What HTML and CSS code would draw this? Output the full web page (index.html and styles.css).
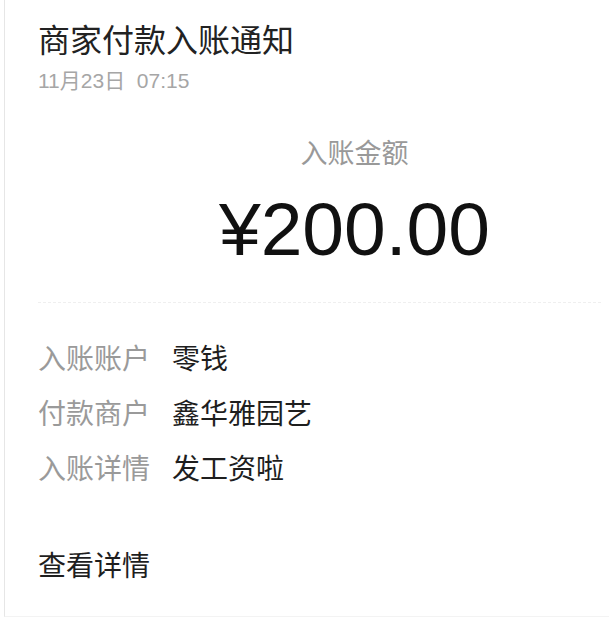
FILE: index.html
```html
<!DOCTYPE html>
<html>
<head>
    <meta charset="utf-8">
    <link rel="stylesheet" href="styles.css">
</head>
<body>
    <div class="card">
        <div class="header">
            <h1 class="title">商家付款入账通知</h1>
            <div class="date">11月23日&nbsp;&nbsp;07:15</div>
        </div>
        <div class="amount-box">
            <div class="amount-label">入账金额</div>
            <div class="amount">¥200.00</div>
        </div>
        <div class="divider"></div>
        <div class="details">
            <div class="row"><span class="label">入账账户</span><span class="value">零钱</span></div>
            <div class="row"><span class="label">付款商户</span><span class="value">鑫华雅园艺</span></div>
            <div class="row"><span class="label">入账详情</span><span class="value">发工资啦</span></div>
        </div>
        <div class="link">查看详情</div>
    </div>
</body>
</html>
```

FILE: styles.css
```css
html, body {
    margin: 0;
    padding: 0;
    background: #fff;
}
body {
    font-family: "Liberation Sans", "Noto Sans CJK SC", sans-serif;
    color: #1a1a1a;
}
.card {
    margin-left: 4px;
    height: 617px;
    border-left: 1px solid #e6e6e6;
    border-bottom: 1px solid #f3f3f3;
    padding-left: 33px;
    box-sizing: border-box;
}
.header {
    padding-top: 22px;
}
.title {
    margin: 0;
    font-size: 32px;
    font-weight: normal;
    line-height: 38px;
    color: #222;
}
.date {
    margin-top: 9px;
    font-size: 21px;
    line-height: 24px;
    color: #a6a6a6;
}
.amount-box {
    text-align: center;
    padding-left: 78px;
    padding-right: 16px;
    padding-top: 44px;
}
.amount-label {
    font-size: 27px;
    line-height: 34px;
    color: #999;
}
.amount {
    margin-top: 17px;
    font-size: 75px;
    line-height: 82px;
    color: #111;
}
.divider {
    margin-top: 32px;
    margin-right: 8px;
    border-top: 1px dashed #efefef;
}
.details {
    padding-top: 40px;
}
.row {
    display: flex;
    font-size: 28px;
    line-height: 34px;
    margin-bottom: 21px;
}
.label {
    width: 134px;
    color: #9a9a9a;
}
.value {
    color: #1e1e1e;
}
.link {
    margin-top: 63px;
    font-size: 28px;
    line-height: 34px;
    color: #1e1e1e;
}
```
